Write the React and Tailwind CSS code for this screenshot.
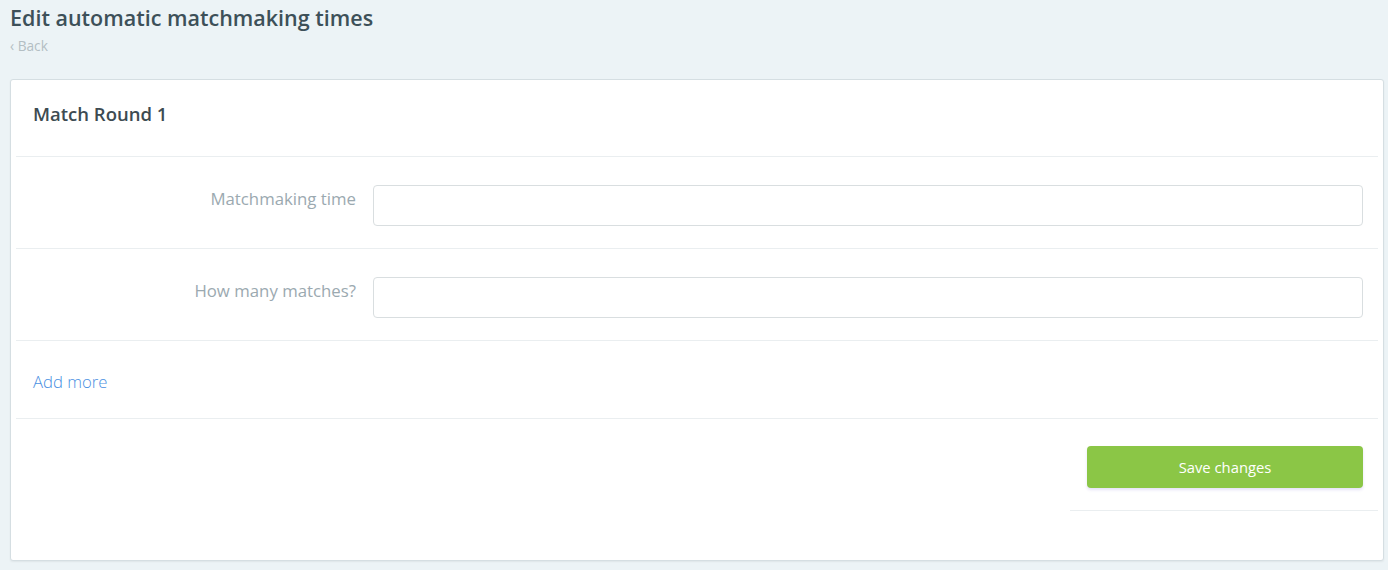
import React from 'react';

const FormRow = ({ label }) => (
  <div className="flex border-b border-[#eaeef0] pt-[28px] pb-[22px]">
    <label className="w-[357px] shrink-0 pr-[17px] pt-[2px] text-right text-[16.8px] leading-[24px] text-[#9ba9b0]">{label}</label>
    <input
      type="text"
      className="mr-[15px] h-[41px] flex-1 rounded-[4px] border border-[#d9dee0] bg-white px-3 outline-none"
    />
  </div>
);

const App = () => {
  return (
    <div className="min-h-[570px] bg-[#ecf3f6] pl-[10px] pr-[4px] pt-[4px] font-['Open_Sans','Noto_Sans',sans-serif]">
      <h1 className="text-[21.5px] font-semibold leading-[28px] text-[#3d5059]">Edit automatic matchmaking times</h1>
      <a href="#" className="mt-[5px] block text-[13.7px] leading-[18px] text-[#b3bec3]">‹ Back</a>
      <div className="mt-[24px] h-[482px] rounded-[3px] border border-[#d5dee2] bg-white px-[5px] shadow-[0_1px_2px_rgba(0,0,0,0.06)]">
        <div className="flex h-[77px] items-center border-b border-[#eaeef0] px-[17px] pb-[8px]">
          <h2 className="text-[18.5px] font-semibold text-[#3d4b52]">Match Round 1</h2>
        </div>
        <FormRow label="Matchmaking time" />
        <FormRow label="How many matches?" />
        <div className="flex h-[78px] items-center border-b border-[#eaeef0] px-[17px] pt-[5px]">
          <a href="#" className="text-[16.7px] font-light text-[#4a90e2]">Add more</a>
        </div>
        <div className="flex justify-end">
          <div className="w-[308px] border-b border-[#eaeef0] pt-[27px] pb-[22px] pl-[17px] pr-[15px]">
            <button className="h-[42px] w-full rounded-[4px] bg-[#8bc646] text-[14.8px] text-white shadow-[0_2px_3px_rgba(80,60,200,0.15)]">
              Save changes
            </button>
          </div>
        </div>
      </div>
    </div>
  );
};

export default App;
